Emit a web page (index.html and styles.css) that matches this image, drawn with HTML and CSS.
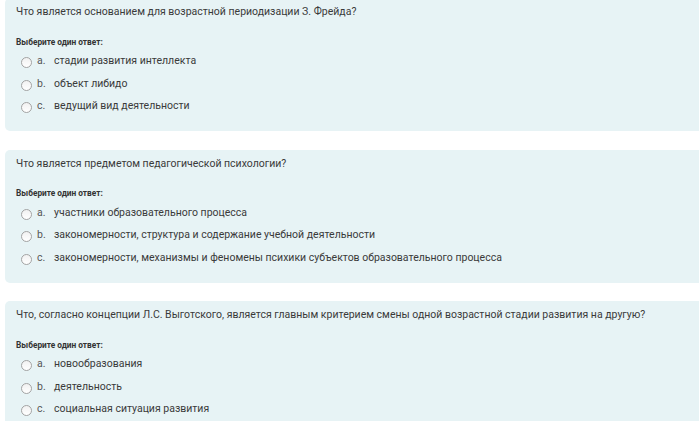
FILE: index.html
```html
<!DOCTYPE html>
<html lang="ru">
  <head>
    <meta charset="UTF-8" />
    <title>Тест</title>
    <link rel="stylesheet" href="styles.css">
  </head>
  <body>
    <div class="que">
      <div class="qtext">Что является основанием для возрастной периодизации З. Фрейда?</div>
      <div class="prompt">Выберите один ответ:</div>
      <div class="answer">
        <div class="opt"><span class="radio"></span><span class="letter">a.</span>стадии развития интеллекта</div>
        <div class="opt"><span class="radio"></span><span class="letter">b.</span>объект либидо</div>
        <div class="opt"><span class="radio"></span><span class="letter">c.</span>ведущий вид деятельности</div>
      </div>
    </div>

    <div class="que">
      <div class="qtext">Что является предметом педагогической психологии?</div>
      <div class="prompt">Выберите один ответ:</div>
      <div class="answer">
        <div class="opt"><span class="radio"></span><span class="letter">a.</span>участники образовательного процесса</div>
        <div class="opt"><span class="radio"></span><span class="letter">b.</span>закономерности, структура и содержание учебной деятельности</div>
        <div class="opt"><span class="radio"></span><span class="letter">c.</span>закономерности, механизмы и феномены психики субъектов образовательного процесса</div>
      </div>
    </div>

    <div class="que">
      <div class="qtext">Что, согласно концепции Л.С. Выготского, является главным критерием смены одной возрастной стадии развития на другую?</div>
      <div class="prompt">Выберите один ответ:</div>
      <div class="answer">
        <div class="opt"><span class="radio"></span><span class="letter">a.</span>новообразования</div>
        <div class="opt"><span class="radio"></span><span class="letter">b.</span>деятельность</div>
        <div class="opt"><span class="radio"></span><span class="letter">c.</span>социальная ситуация развития</div>
      </div>
    </div>
  </body>
</html>
```

FILE: styles.css
```css
html,
body {
  height: 100%;
}
body {
  margin: 0;
  padding-top: 1px;
  background: #fff;
  font-family: Roboto, "Liberation Sans", Arial, sans-serif;
  color: #3a3a3a;
  overflow: hidden;
  box-sizing: border-box;
}
.que {
  width: 720px;
  height: 133px;
  box-sizing: border-box;
  margin: 0 0 18.5px 5px;
  padding: 7px 0 0 11px;
  background: #e7f3f5;
  border-radius: 5px;
}
.que:first-child {
  margin-top: -3px;
}
.qtext {
  font-size: 10.5px;
  line-height: 14px;
}
.prompt {
  margin-top: 17.5px;
  font-size: 8.3px;
  line-height: 10px;
  font-weight: bold;
  color: #333;
}
.answer {
  margin-top: 3px;
}
.opt {
  display: flex;
  align-items: center;
  height: 22.5px;
  font-size: 10.5px;
  padding-left: 5px;
}
.radio {
  width: 9px;
  height: 9px;
  border: 1px solid #a3a3a3;
  border-radius: 50%;
  background: linear-gradient(#f1f1f1, #ffffff);
  margin-top: 4px;
  margin-right: 5px;
}
.letter {
  width: 17px;
  color: #555;
}
```
